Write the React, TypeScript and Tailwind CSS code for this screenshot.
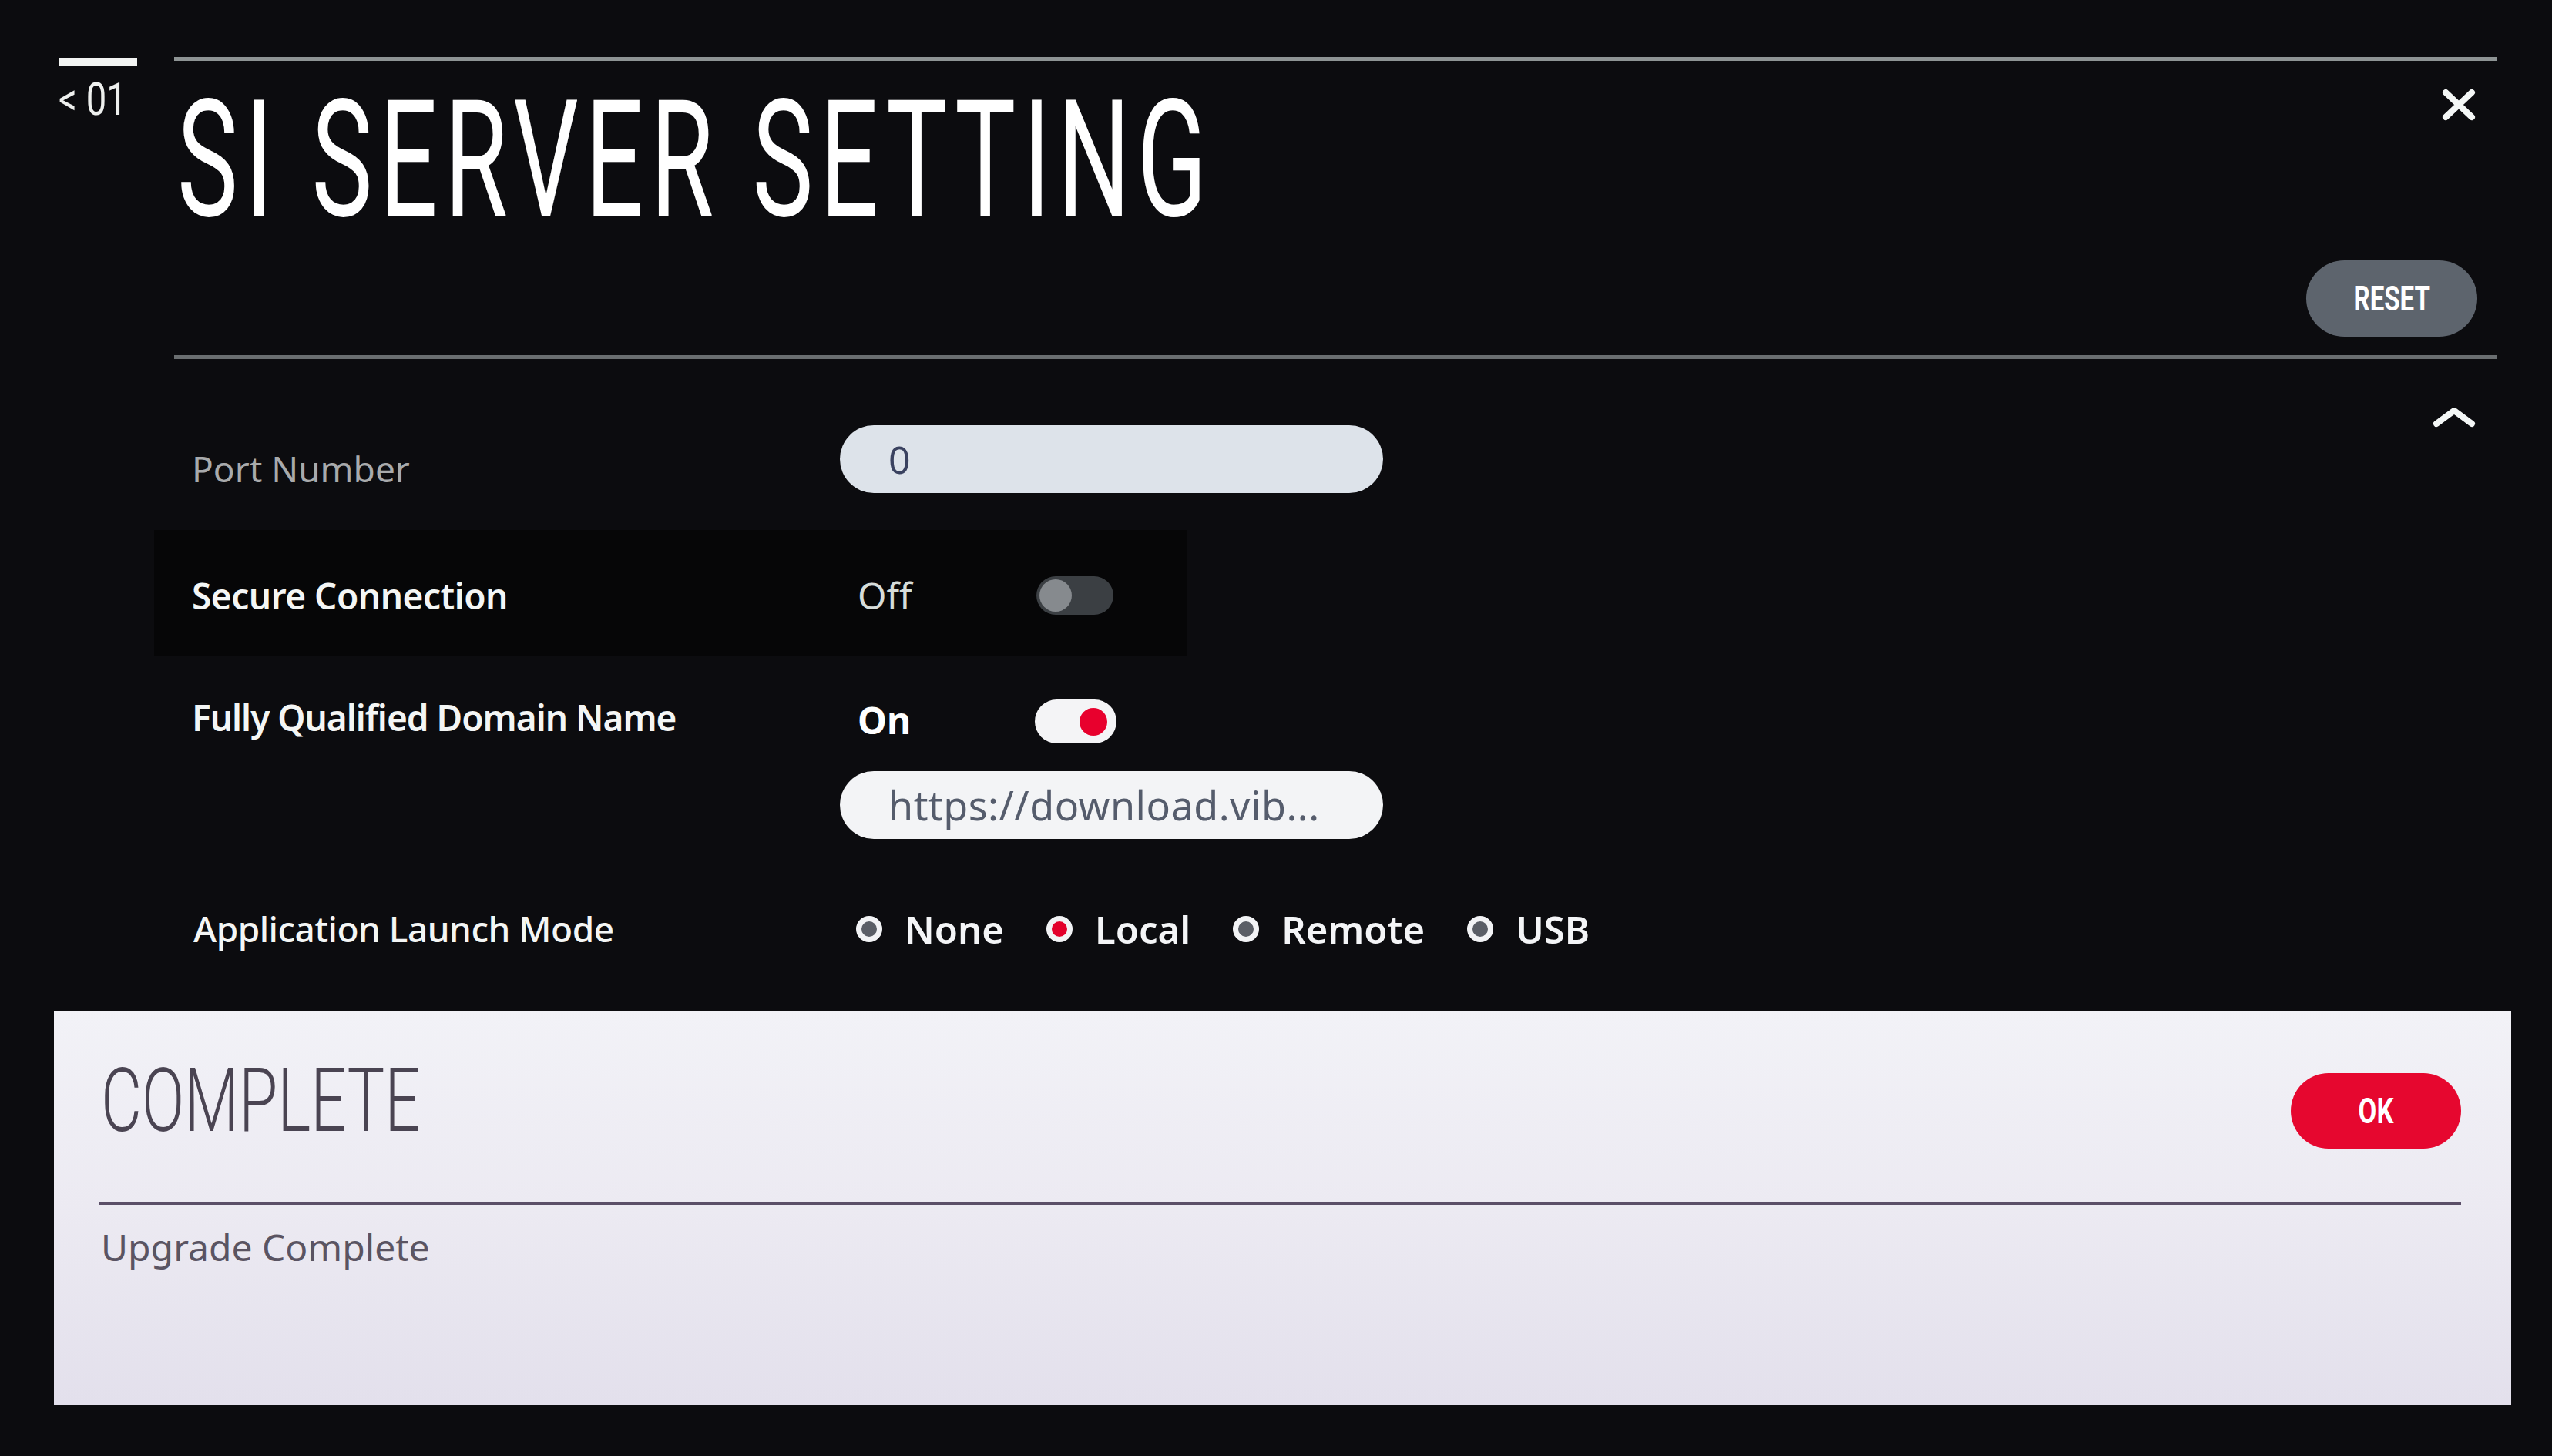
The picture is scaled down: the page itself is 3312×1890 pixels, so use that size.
import React from "react";

function Toggle({ on }: { on: boolean }) {
    if (on) {
        return (
            <div className="w-[106px] h-[57px] rounded-full bg-[#f4f4f6] flex items-center justify-end pr-[12px]">
                <div className="w-[36px] h-[36px] rounded-full bg-[#e8002d]" />
            </div>
        );
    }
    return (
        <div className="w-[100px] h-[50px] rounded-full bg-[#3b3f43] flex items-center pl-[4px]">
            <div className="w-[42px] h-[42px] rounded-full bg-[#868a8e]" />
        </div>
    );
}

function Radio({ label, selected }: { label: string; selected?: boolean }) {
    return (
        <div className="flex items-center gap-[29px]">
            <span
                className={`w-[34px] h-[34px] rounded-full border-[7px] border-[#f2f3f5] ${selected ? "bg-[#e3002b]" : "bg-[#5a5e66]"}`}
            />
            <span className="text-[49px] leading-none font-semibold text-[#f4f5f7]">{label}</span>
        </div>
    );
}

export default function App() {
    return (
        <div className="w-[3312px] h-[1890px] relative overflow-hidden bg-[#0c0c0f] font-['Noto_Sans',sans-serif]">
            <div className="flex pt-[74px] pl-[76px] pr-[72px]">
                {/* left gutter */}
                <div className="w-[150px] shrink-0">
                    <div className="w-[102px] h-[11px] bg-[#f2f4f2] mt-[1px]" />
                    <div className="mt-[13px] text-[59px] leading-none text-[#eef0ee] font-['Roboto',sans-serif] inline-block origin-left scale-x-[0.8] whitespace-nowrap">
                        &lt; 01
                    </div>
                </div>

                {/* main */}
                <div className="flex-1">
                    <div className="h-[5px] bg-[#8e9494]" />

                    <div className="flex justify-between items-start mt-[24px]">
                        <h1 className="text-[211px] leading-none font-normal tracking-[14px] text-white font-['Roboto',sans-serif] origin-left scale-x-[0.63] whitespace-nowrap ml-[4px]">
                            SI SERVER SETTING
                        </h1>
                        <svg width="46" height="42" viewBox="0 0 46 42" className="mt-[12px] mr-[26px]">
                            <path d="M6 5 L40 37 M40 5 L6 37" stroke="#f4f7f6" strokeWidth="8" strokeLinecap="round" />
                        </svg>
                    </div>

                    <div className="flex justify-end mt-[24px] mr-[25px]">
                        <div className="w-[222px] h-[99px] rounded-full bg-[#5d646d] flex items-center justify-center">
                            <span className="text-[44px] leading-none font-bold text-white font-['Roboto',sans-serif] inline-block scale-x-[0.75]">
                                RESET
                            </span>
                        </div>
                    </div>

                    <div className="h-[5px] bg-[#6a6e70] mt-[24px]" />

                    <div className="relative">
                        <svg width="58" height="30" viewBox="0 0 58 30" className="absolute top-[60px] right-[26px]">
                            <path d="M6 24 L29 7 L52 24" fill="none" stroke="#f4f7f6" strokeWidth="8" strokeLinecap="round" strokeLinejoin="round" />
                        </svg>

                        <div className="flex flex-col -ml-[26px]">
                            {/* Port Number */}
                            <div className="flex items-center mt-[86px]">
                                <div className="w-[890px] pl-[49px] text-[46px] leading-none text-[#a8aaac] mt-[24px]">
                                    Port Number
                                </div>
                                <div className="w-[705px] h-[88px] rounded-full bg-[#dde3ea] flex items-center pl-[63px] text-[50px] leading-none text-[#3a4260]">
                                    0
                                </div>
                            </div>

                            {/* Secure Connection */}
                            <div className="flex items-center mt-[48px] w-[1340px] h-[163px] bg-[#060607] pt-[6px]">
                                <div className="w-[890px] pl-[49px] text-[46px] leading-none font-semibold text-[#f4f6f5] tracking-[-0.5px]">
                                    Secure Connection
                                </div>
                                <div className="w-[255px] pl-[23px] text-[48px] leading-none text-[#d6dcd9]">Off</div>
                                <Toggle on={false} />
                            </div>

                            {/* FQDN */}
                            <div className="flex items-center mt-[57px] h-[57px]">
                                <div className="w-[890px] pl-[49px] text-[46px] leading-none font-semibold text-[#f4f6f5] tracking-[-1px] -mt-[12px]">
                                    Fully Qualified Domain Name
                                </div>
                                <div className="w-[253px] pl-[23px] text-[48px] leading-none font-bold text-white -mt-[4px]">On</div>
                                <Toggle on={true} />
                            </div>

                            <div className="ml-[890px] mt-[36px] w-[705px] h-[88px] rounded-full bg-[#f3f4f6] flex items-center pl-[63px] text-[52px] leading-none tracking-[0.5px] text-[#555c6c]">
                                https://download.vib...
                            </div>

                            {/* Application Launch Mode */}
                            <div className="flex items-center mt-[87px] h-[60px]">
                                <div className="w-[890px] pl-[51px] text-[46px] leading-none font-medium text-[#f4f6f5] tracking-[-0.5px] -mt-[2px]">
                                    Application Launch Mode
                                </div>
                                <div className="flex items-center gap-[55px] pl-[21px]">
                                    <Radio label="None" />
                                    <Radio label="Local" selected />
                                    <Radio label="Remote" />
                                    <Radio label="USB" />
                                </div>
                            </div>
                        </div>
                    </div>
                </div>
            </div>

            {/* popup */}
            <div className="absolute left-[70px] top-[1312px] w-[3189px] h-[512px] bg-gradient-to-b from-[#f2f2f7] via-[#eceaf2] to-[#e3e0ec] pt-[59px] pl-[61px] pr-[65px]">
                <div className="flex justify-between items-start">
                    <div className="text-[115px] leading-none font-light text-[#4a4452] font-['Roboto',sans-serif] origin-left scale-x-[0.71] whitespace-nowrap">
                        COMPLETE
                    </div>
                    <div className="mt-[22px] w-[221px] h-[98px] rounded-full bg-[#e6072f] flex items-center justify-center">
                        <span className="text-[46px] leading-none font-bold text-white font-['Roboto',sans-serif] inline-block scale-x-[0.75]">
                            OK
                        </span>
                    </div>
                </div>
                <div className="h-[4px] bg-[#5b4f68] mt-[69px] -ml-[3px]" />
                <div className="mt-[31px] text-[48px] leading-none text-[#5a5462]">Upgrade Complete</div>
            </div>
        </div>
    );
}
